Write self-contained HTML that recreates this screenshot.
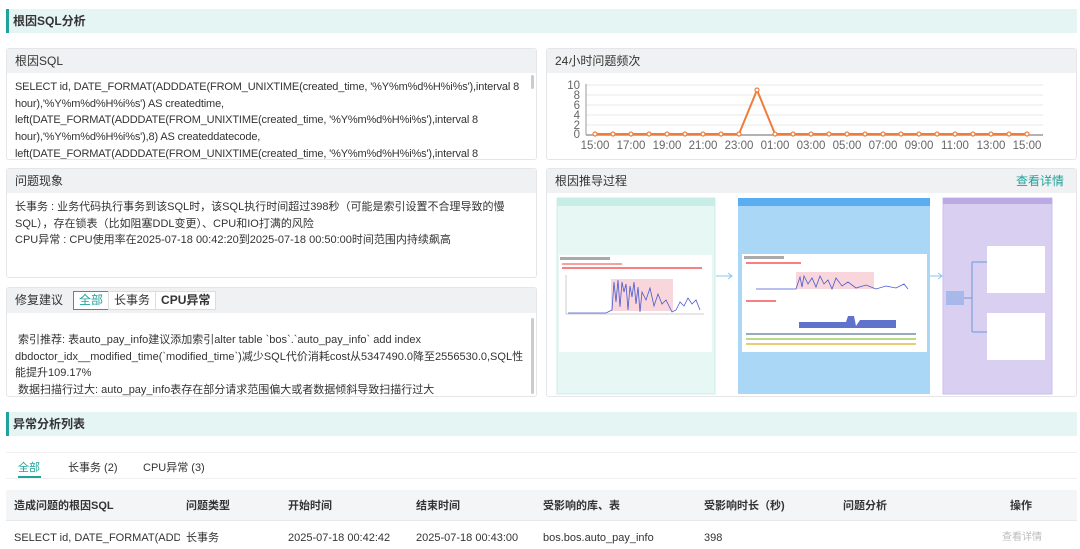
<!DOCTYPE html>
<html><head><meta charset="utf-8">
<style>
*{margin:0;padding:0;box-sizing:border-box}
body{width:1080px;height:549px;background:#fff;font-family:"Liberation Sans","Noto Sans CJK SC",sans-serif;color:#333;position:relative;overflow:hidden;font-size:12px}
.abs{position:absolute}
.sec{position:absolute;left:6px;width:1071px;height:24px;background:#e5f5f3;border-left:3px solid #20a39a;font-weight:bold;font-size:12px;line-height:24px;padding-left:4px;color:#333}
.panel{position:absolute;border:1px solid #e4e6ea;border-radius:3px;background:#fff;overflow:hidden}
.ph{height:24px;background:#f0f1f3;font-size:12px;line-height:24px;padding-left:8px;color:#333}
.txt{padding:6px 8px 4px;font-size:11px;line-height:16.7px;color:#333}
.tab{display:inline-block;border:1px solid #ddd;height:19px;line-height:17px;padding:0 5px;font-size:12px;background:#fff;margin-right:-1px}
.th{position:absolute;top:499px;font-weight:bold;font-size:11px;line-height:14px}
.td{position:absolute;top:531px;font-size:11px;line-height:14px}
</style></head><body>
<div class="sec" style="top:9px">根因SQL分析</div>

<div class="panel" style="left:6px;top:48px;width:531px;height:112px">
<div class="ph">根因SQL</div>
<div class="txt" style="height:88px;overflow:hidden;letter-spacing:-0.15px;padding-right:4px">SELECT id, DATE_FORMAT(ADDDATE(FROM_UNIXTIME(created_time, '%Y%m%d%H%i%s'),interval 8 hour),'%Y%m%d%H%i%s') AS createdtime,<br>left(DATE_FORMAT(ADDDATE(FROM_UNIXTIME(created_time, '%Y%m%d%H%i%s'),interval 8 hour),'%Y%m%d%H%i%s'),8) AS createddatecode,<br>left(DATE_FORMAT(ADDDATE(FROM_UNIXTIME(created_time, '%Y%m%d%H%i%s'),interval 8</div>
<div class="abs" style="right:2px;top:26px;width:3px;height:14px;background:#ccc;border-radius:2px"></div>
</div>

<div class="panel" style="left:6px;top:168px;width:531px;height:110px">
<div class="ph">问题现象</div>
<div class="txt">长事务 : 业务代码执行事务到该SQL时，该SQL执行时间超过398秒（可能是索引设置不合理导致的慢SQL），存在锁表（比如阻塞DDL变更）、CPU和IO打满的风险<br>CPU异常 : CPU使用率在2025-07-18 00:42:20到2025-07-18 00:50:00时间范围内持续飙高</div>
</div>

<div class="panel" style="left:6px;top:287px;width:531px;height:110px">
<div class="ph" style="height:25px;padding-top:3px;line-height:19px">修复建议&nbsp;&nbsp;&nbsp;<span class="tab" style="border-color:#20a39a;color:#20a39a">全部</span><span class="tab">长事务</span><span class="tab" style="font-weight:bold">CPU异常</span></div>
<div class="txt" style="padding-top:19px">&nbsp;索引推荐: 表auto_pay_info建议添加索引alter table `bos`.`auto_pay_info` add index dbdoctor_idx__modified_time(`modified_time`)减少SQL代价消耗cost从5347490.0降至2556530.0,SQL性能提升109.17%<br>&nbsp;数据扫描行过大: auto_pay_info表存在部分请求范围偏大或者数据倾斜导致扫描行过大</div>
<div class="abs" style="right:2px;top:30px;width:3px;height:76px;background:#ccc;border-radius:2px"></div>
</div>

<div class="panel" style="left:546px;top:48px;width:531px;height:112px">
<div class="ph">24小时问题频次</div>
</div>
<svg class="abs" style="left:546px;top:72px" width="531" height="88">
<g font-family="Liberation Sans" font-size="11.5" fill="#666">
<text x="34" y="17" text-anchor="end">10</text><text x="34" y="27" text-anchor="end">8</text><text x="34" y="37" text-anchor="end">6</text><text x="34" y="47" text-anchor="end">4</text><text x="34" y="57" text-anchor="end">2</text><text x="34" y="66" text-anchor="end">0</text>
</g>
<g stroke="#e8e8e8" stroke-width="1">
<line x1="40" y1="13" x2="497" y2="13"/><line x1="40" y1="23" x2="497" y2="23"/><line x1="40" y1="33" x2="497" y2="33"/><line x1="40" y1="43" x2="497" y2="43"/><line x1="40" y1="53" x2="497" y2="53"/>
</g>
<line x1="40" y1="63" x2="497" y2="63" stroke="#666"/>
<line x1="40" y1="12" x2="40" y2="63" stroke="#999"/>
<polyline fill="none" stroke="#f07c3a" stroke-width="2" points="49,62 67,62 85,62 103,62 121,62 139,62 157,62 175,62 193,62 211,18 229,62 247,62 265,62 283,62 301,62 319,62 337,62 355,62 373,62 391,62 409,62 427,62 445,62 463,62 481,62"/>
<g fill="#fff" stroke="#f07c3a" stroke-width="1.2">
<circle cx="49" cy="62" r="2"/><circle cx="67" cy="62" r="2"/><circle cx="85" cy="62" r="2"/><circle cx="103" cy="62" r="2"/><circle cx="121" cy="62" r="2"/><circle cx="139" cy="62" r="2"/><circle cx="157" cy="62" r="2"/><circle cx="175" cy="62" r="2"/><circle cx="193" cy="62" r="2"/><circle cx="211" cy="18" r="2"/><circle cx="229" cy="62" r="2"/><circle cx="247" cy="62" r="2"/><circle cx="265" cy="62" r="2"/><circle cx="283" cy="62" r="2"/><circle cx="301" cy="62" r="2"/><circle cx="319" cy="62" r="2"/><circle cx="337" cy="62" r="2"/><circle cx="355" cy="62" r="2"/><circle cx="373" cy="62" r="2"/><circle cx="391" cy="62" r="2"/><circle cx="409" cy="62" r="2"/><circle cx="427" cy="62" r="2"/><circle cx="445" cy="62" r="2"/><circle cx="463" cy="62" r="2"/><circle cx="481" cy="62" r="2"/>
</g>
<g font-family="Liberation Sans" font-size="11.5" fill="#666" text-anchor="middle">
<text x="49" y="77">15:00</text><text x="85" y="77">17:00</text><text x="121" y="77">19:00</text><text x="157" y="77">21:00</text><text x="193" y="77">23:00</text><text x="229" y="77">01:00</text><text x="265" y="77">03:00</text><text x="301" y="77">05:00</text><text x="337" y="77">07:00</text><text x="373" y="77">09:00</text><text x="409" y="77">11:00</text><text x="445" y="77">13:00</text><text x="481" y="77">15:00</text>
</g>
</svg>

<div class="panel" style="left:546px;top:168px;width:531px;height:229px">
<div class="ph">根因推导过程<span style="position:absolute;right:12px;color:#20a39a">查看详情</span></div>
</div>
<svg class="abs" style="left:546px;top:192px" width="531" height="205">
<rect x="11" y="6" width="158" height="196" fill="#e6f7f4" stroke="#cdeee8"/>
<rect x="11" y="6" width="158" height="8" fill="#c8ede7"/>
<rect x="13" y="63" width="153" height="97" fill="#fff"/>
<rect x="14" y="65" width="50" height="3" fill="#aaa"/>
<rect x="16" y="71" width="60" height="2" fill="#f8a0a0"/><rect x="16" y="75" width="140" height="2" fill="#f88080"/>
<rect x="65" y="87" width="62" height="32" fill="#f8d6dc"/>
<line x1="20" y1="83" x2="20" y2="122" stroke="#999" stroke-width=".5"/><line x1="20" y1="122" x2="158" y2="122" stroke="#999" stroke-width=".5"/>
<polyline fill="none" stroke="#4a5ad0" stroke-width=".8" points="22,121 60,121 66,118 68,90 70,110 72,88 74,115 76,90 78,100 80,92 82,118 84,94 86,105 88,90 90,112 92,95 94,120 96,100 100,108 104,96 108,114 112,102 116,112 120,108 126,120 130,118 134,110 138,114 142,106 146,112 150,108 154,118"/>
<line x1="170" y1="84" x2="186" y2="84" stroke="#8cc4ee"/><path d="M182,81 L186,84 L182,87" fill="none" stroke="#8cc4ee"/>
<rect x="192" y="6" width="192" height="196" fill="#a9d7f5"/>
<rect x="192" y="6" width="192" height="8" fill="#5aadf0"/>
<rect x="196" y="62" width="185" height="98" fill="#fff"/>
<rect x="198" y="64" width="40" height="3" fill="#aaa"/>
<rect x="200" y="70" width="55" height="2" fill="#f88080"/>
<rect x="250" y="80" width="78" height="17" fill="#f8d6dc"/>
<polyline fill="none" stroke="#4a5ad0" stroke-width=".8" points="210,97 250,97 254,85 256,95 258,84 262,92 266,86 270,95 274,84 278,92 282,88 286,97 290,86 296,94 302,90 310,96 320,93 330,97 340,94 350,96 358,92 362,97"/>
<rect x="200" y="108" width="30" height="2" fill="#f88080"/>
<path d="M210,136 L253,136 L253,130 L300,130 L302,124 L308,124 L310,134 L314,128 L350,128 L350,136 L360,136 Z" fill="#5f72cc"/>
<rect x="200" y="141" width="170" height="2" fill="#9ab"/><rect x="200" y="146" width="170" height="2" fill="#b9d88a"/><rect x="200" y="151" width="170" height="2" fill="#e8cc70"/>
<line x1="384" y1="84" x2="396" y2="84" stroke="#8cc4ee"/><path d="M392,81 L396,84 L392,87" fill="none" stroke="#8cc4ee"/>
<rect x="397" y="6" width="109" height="196" fill="#d9cff0" stroke="#cabfe8"/>
<rect x="397" y="6" width="109" height="6" fill="#bca9e3"/>
<rect x="441" y="54" width="58" height="47" fill="#fff"/>
<rect x="441" y="121" width="58" height="47" fill="#fff"/>
<rect x="400" y="99" width="18" height="14" fill="#a9b8ea"/>
<path d="M418,106 L426,106 M426,70 L426,140 M426,70 L441,70 M426,140 L441,140" stroke="#6a9ad8" fill="none"/>
</svg>

<div class="sec" style="top:412px">异常分析列表</div>
<div class="abs" style="left:6px;top:452px;width:1071px;height:1px;background:#eef0f2"></div>
<div class="abs" style="left:18px;top:459px;font-size:11px;color:#20a39a">全部</div>
<div class="abs" style="left:18px;top:476px;width:23px;height:2px;background:#20a39a"></div>
<div class="abs" style="left:68px;top:459px;font-size:11px">长事务 (2)</div>
<div class="abs" style="left:143px;top:459px;font-size:11px">CPU异常 (3)</div>
<div class="abs" style="left:6px;top:478px;width:1071px;height:1px;background:#eef0f2"></div>
<div class="abs" style="left:6px;top:490px;width:1071px;height:31px;background:#f4f5f6;border-bottom:1px solid #e6e8ea"></div>
<div class="th" style="left:14px">造成问题的根因SQL</div>
<div class="th" style="left:186px">问题类型</div>
<div class="th" style="left:288px">开始时间</div>
<div class="th" style="left:416px">结束时间</div>
<div class="th" style="left:543px">受影响的库、表</div>
<div class="th" style="left:704px">受影响时长（秒)</div>
<div class="th" style="left:843px">问题分析</div>
<div class="th" style="left:1010px">操作</div>
<div class="td" style="left:14px;width:166px;overflow:hidden;white-space:nowrap">SELECT id, DATE_FORMAT(ADDDATE(FROM</div>
<div class="td" style="left:186px">长事务</div>
<div class="td" style="left:288px">2025-07-18 00:42:42</div>
<div class="td" style="left:416px">2025-07-18 00:43:00</div>
<div class="td" style="left:543px">bos.bos.auto_pay_info</div>
<div class="td" style="left:704px">398</div>
<div class="td" style="left:1002px;color:#bbb;font-size:10px">查看详情</div>
</body></html>
